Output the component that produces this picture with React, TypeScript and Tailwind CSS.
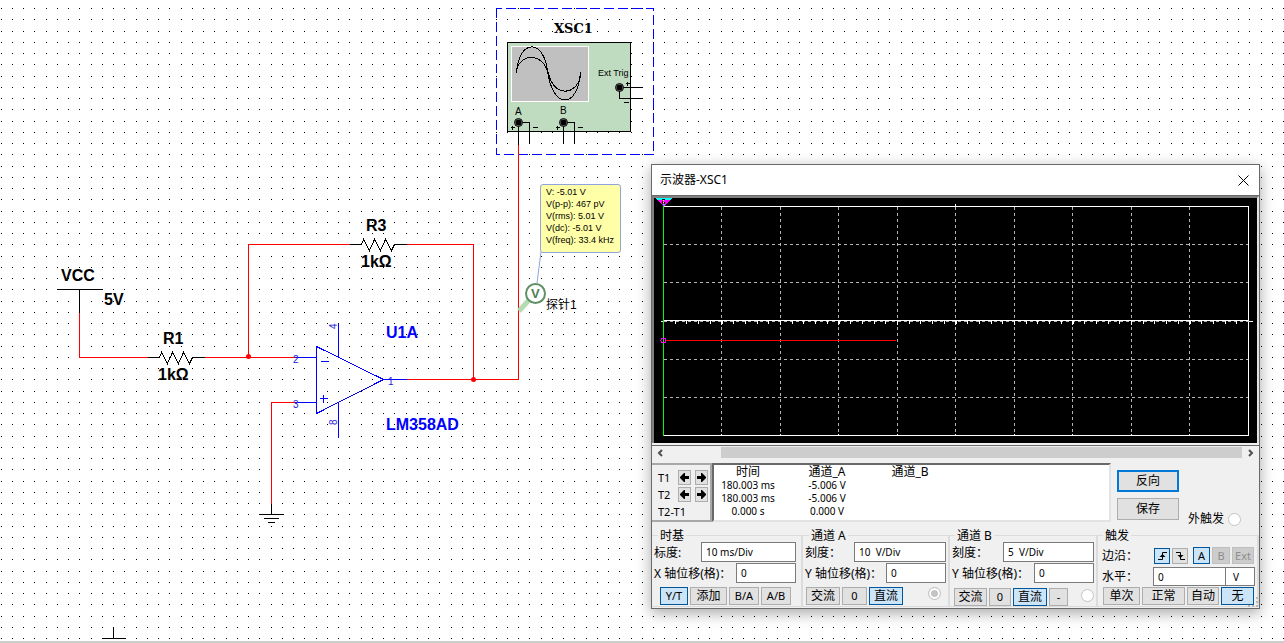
import type { ReactNode } from 'react';
import { clsx } from 'clsx';

const GRID_STEPS = [0, 11, 22, 33];
const ZIGZAG = 'l2 -5 l6 11 l5 -11 l6 11 l5 -11 l6 11 l3 -6';

const PROBE_LINES = ['V: -5.01 V', 'V(p-p): 467 pV', 'V(rms): 5.01 V', 'V(dc): -5.01 V', 'V(freq): 33.4 kHz'];

const READINGS = [
  ['180.003 ms', '-5.006 V'],
  ['180.003 ms', '-5.006 V'],
  ['0.000 s', '0.000 V'],
];

const DIV_X = [67, 126, 184, 243, 301, 360, 418, 477, 535];
const DIV_Y = [46, 84, 161, 199];
const TICKS = Array.from({ length: 49 }, (_, i) => Math.round(9 + (i + 1) * 11.7));

function Terminal({ x, y }: { x: number; y: number }) {
  return (
    <g shapeRendering="auto">
      <circle cx={x} cy={y} r="4" fill="#9a9a9a" stroke="#000" />
      <circle cx={x} cy={y} r="3" fill="#000" />
    </g>
  );
}

function Schematic() {
  return (
    <svg className="absolute inset-0 h-full w-full" role="img" aria-label="Schematic">
      <defs>
        <pattern id="dots" x="1" y="31" width="45" height="45" patternUnits="userSpaceOnUse">
          {GRID_STEPS.map((y) =>
            GRID_STEPS.map((x) => <rect key={`${x}-${y}`} x={x} y={y} width="1" height="1" fill="#000" />),
          )}
        </pattern>
      </defs>
      <rect width="100%" height="100%" fill="url(#dots)" />

      <g transform="translate(0.5 0.5)" fill="none" shapeRendering="crispEdges">
        {/* instrument block */}
        <path d="M496 8H653V154H496Z" stroke="#0000ff" strokeDasharray="10 4" strokeDashoffset="5" />
        <rect x="507" y="42" width="123" height="89" fill="#c0dcc0" stroke="#000" />
        <rect x="511" y="46" width="77" height="55" fill="#c0c0c0" stroke="#fff" />
        <g stroke="#000">
          <path d="M516 73C518 38 543 38 547 70C552 109 577 109 580 72" />
          <path d="M516 70C520 52 542 52 548 73C553 96 575 96 580 76" />
        </g>
        <path d="M518 122V144M518 122H529V143M563 122V143M563 122H574V143M619 87H642M619 87V98H642" stroke="#000" />
        <path d="M510 127H514M512 125V129M532 127H537M555 127H559M557 125V129M577 127H582M625 83H629M627 81V85M623 102H628" stroke="#000" />
        <Terminal x={518} y={122} />
        <Terminal x={563} y={122} />
        <Terminal x={619} y={87} />

        {/* wires */}
        <g stroke="#ff0000">
          <path d="M518 144V379H406" />
          <path d="M248 357V244H349M406 244H473V379" />
          <path d="M79 312V357H147M204 357H294" />
          <path d="M271 503V402H294" />
        </g>
        <g fill="#ff0000" shapeRendering="auto">
          <circle cx="248" cy="356" r="2.5" />
          <circle cx="473" cy="379" r="2.5" />
        </g>

        {/* supply, resistors and grounds */}
        <g stroke="#000">
          <path d="M57 289H102M79 289V312" />
          <path d="M147 357H159M192 357H204M349 244H361M394 244H406" />
          <path d={`M159 357${ZIGZAG}`} />
          <path d={`M361 244${ZIGZAG}`} />
          <path d="M271 503V514M259 514H283M263 518H278M267 522H274" />
          <path d="M113 627V638M102 638H125" />
        </g>

        {/* op-amp */}
        <g stroke="#0000ff">
          <path d="M316 346L383 379L316 413Z" />
          <path d="M294 357H316M294 402H316M383 379H406M338 323V357M338 402V437" />
          <path d="M320 361H328M319 398H327M323 394V402" />
        </g>
      </g>

      <g className="font-['Liberation_Sans',sans-serif] text-base font-bold">
        <text x="61" y="281">VCC</text>
        <text x="104" y="305">5V</text>
        <text x="163" y="344">R1</text>
        <text x="158" y="380">1kΩ</text>
        <text x="366" y="231">R3</text>
        <text x="361" y="267">1kΩ</text>
        <text x="386" y="338" fill="#0000ff">U1A</text>
        <text x="386" y="430" fill="#0000ff">LM358AD</text>
      </g>
      <g className="font-['Liberation_Sans',sans-serif] text-[10px]" fill="#2020e0">
        <text x="293" y="363">2</text>
        <text x="293" y="408">3</text>
        <text x="388" y="385">1</text>
        <text transform="translate(337 329) rotate(-90)">4</text>
        <text transform="translate(337 425) rotate(-90)">8</text>
      </g>
      <g className="font-['Liberation_Sans',sans-serif] text-[10px]">
        <text x="598" y="76" className="text-[9px]">Ext Trig</text>
        <text x="515" y="115">A</text>
        <text x="560" y="114">B</text>
      </g>
      <text x="554" y="33" className="font-['DejaVu_Serif',serif] text-[13px] font-bold">XSC1</text>

      {/* voltage probe */}
      <path d="M541 252L537 283" stroke="#8fa4dc" />
      <path d="M519 311L529 300" stroke="#b4dcb0" strokeWidth="5" />
      <circle cx="535.5" cy="293.5" r="9.5" fill="#fff" stroke="#5f8f64" strokeWidth="2" />
      <text x="531" y="298" fill="#4f8055" className="font-['Liberation_Sans',sans-serif] text-[13px] font-bold">V</text>
      <text x="546" y="309" className="font-['Liberation_Sans','Noto_Sans_CJK_SC',sans-serif] text-[12px]">探针1</text>
    </svg>
  );
}

function ProbeNote() {
  return (
    <div className="absolute left-[540px] top-[184px] h-[69px] w-[81px] whitespace-nowrap rounded-[3px] border border-[#8fa4dc] bg-[#ffffa8] pl-[5px] pt-px font-['Liberation_Sans',sans-serif] text-[9px] leading-[12px]">
      {PROBE_LINES.map((line) => (
        <p key={line}>{line}</p>
      ))}
    </div>
  );
}

function ScopeScreen() {
  return (
    <svg className="block h-[245px] w-full bg-black" role="img" aria-label="Trace" shapeRendering="crispEdges">
      <g transform="translate(0.5 0.5)" fill="none">
        <g stroke="#b4b4b4" strokeDasharray="3 3">
          {DIV_X.map((x) => (
            <path key={x} d={`M${x} 8V237`} />
          ))}
          {DIV_Y.map((y) => (
            <path key={y} d={`M9 ${y}H594`} />
          ))}
        </g>
        <path d="M9 8H594V237H9M9 122H594M6 123H9M594 123H598M301 5V8" stroke="#fff" />
        <path d="M9 123H594" stroke="#b4b4b4" strokeDasharray="3 3" />
        <path d={TICKS.map((x) => `M${x} 122V125`).join('')} stroke="#fff" />
        <path d={DIV_X.map((x) => `M${x} 235V237M${x} 121V126`).join('')} stroke="#fff" />
      </g>
      <rect x="9" y="8" width="1" height="230" fill="#00ff00" />
      <rect x="12" y="142" width="230" height="1" fill="#ff0000" />
      <circle cx="9.5" cy="142.5" r="2.5" fill="none" stroke="#ff00ff" />
      <path d="M1 0H18L16 2H3Z" fill="#00ffff" />
      <path d="M3 2H16L10 8H9Z" fill="#ff00ff" />
      <path d="M8 1H11V2H8ZM8 3H9V6H8ZM10 4H11V6H10Z" fill="#000" />
      <path d="M9 2H10V3H9ZM9 4H10V5H9Z" fill="#ffff00" />
      <path d="M9 6H11V7H9Z" fill="#00ffff" />
    </svg>
  );
}

type ButtonProps = { children: ReactNode; className: string; active?: boolean; disabled?: boolean; label?: string };

function PanelButton({ children, className, active, disabled, label }: ButtonProps) {
  return (
    <button
      type="button"
      disabled={disabled}
      aria-label={label}
      className={clsx(
        'flex shrink-0 items-center justify-center whitespace-nowrap border',
        active && 'border-[#00559b] bg-[#cce4f7]',
        disabled && 'border-[#bfbfbf] bg-[#cccccc] text-[#8c8c8c]',
        !active && !disabled && 'border-[#adadad] bg-[#e1e1e1]',
        className,
      )}
    >
      {children}
    </button>
  );
}

function Arrow({ right, label }: { right?: boolean; label: string }) {
  return (
    <PanelButton label={label} className="h-[15px] w-[13px]">
      <svg width="9" height="9" viewBox="0 0 9 9" className="shrink-0">
        <path d={right ? 'M0 3H4V0H5L9 4V5L5 9H4V6H0Z' : 'M9 3H5V0H4L0 4V5L4 9H5V6H9Z'} />
      </svg>
    </PanelButton>
  );
}

function Radio({ label, checked, className }: { label: string; checked?: boolean; className?: string }) {
  return (
    <input
      type="radio"
      aria-label={label}
      defaultChecked={checked}
      className={clsx(
        'size-[13px] shrink-0 appearance-none rounded-full border border-[#c4c4c4] bg-white',
        'checked:border-[#c4c4c4] checked:bg-[#c4c4c4] checked:shadow-[inset_0_0_0_2px_white]',
        className,
      )}
    />
  );
}

type FieldProps = { id: string; label: string; value: string; className: string };

function Field({ id, label, value, className }: FieldProps) {
  return (
    <div className="flex items-center justify-between">
      <label htmlFor={id} className="whitespace-pre pt-0.5">{label}</label>
      <input
        id={id}
        defaultValue={value}
        className={clsx("h-5 min-w-0 border border-[#7a7a7a] bg-white px-1 font-['Noto_Sans',sans-serif] text-[10px]", className)}
      />
    </div>
  );
}

type GroupProps = { title: string; className: string; legendClass?: string; children: ReactNode };

function Group({ title, className, legendClass = 'ml-1', children }: GroupProps) {
  return (
    <fieldset className={clsx('min-w-0 border-y border-r-2 border-[#dcdcdc]', className)}>
      <legend className={clsx('px-0.5 leading-[13px]', legendClass)}>{title}</legend>
      {children}
    </fieldset>
  );
}

function CursorPanel() {
  return (
    <div className="flex h-[59px] items-stretch">
      <div className="grid w-[60px] shrink-0 grid-cols-[1fr_13px_13px] content-start items-center gap-x-1 gap-y-0.5 border-2 border-l-0 border-[#a8a8a8] pl-1.5 pr-0.5 pt-[5px] font-['Noto_Sans',sans-serif] text-[11px] leading-[15px]">
        <span>T1</span>
        <Arrow label="T1 left" />
        <Arrow right label="T1 right" />
        <span>T2</span>
        <Arrow label="T2 left" />
        <Arrow right label="T2 right" />
        <span className="col-span-3 whitespace-nowrap">T2-T1</span>
      </div>
      <div className="w-[399px] shrink-0 border-2 border-b-[#e3e3e3] border-l-[#696969] border-r-[#e3e3e3] border-t-[#696969] bg-white">
        <table className="table-fixed border-collapse text-center font-['Noto_Sans','Noto_Sans_CJK_SC',sans-serif] text-[10px] leading-[13px]">
          <thead>
            <tr className="text-[12px] leading-[14px]">
              <th className="w-[68px] p-0 font-normal">时间</th>
              <th className="w-[90px] p-0 font-normal">通道_A</th>
              <th className="w-[76px] p-0 font-normal">通道_B</th>
            </tr>
          </thead>
          <tbody>
            {READINGS.map(([time, a], i) => (
              <tr key={i}>
                <td className="p-0">{time}</td>
                <td className="p-0">{a}</td>
                <td className="p-0" />
              </tr>
            ))}
          </tbody>
        </table>
      </div>
      <div className="ml-[6px] flex flex-col gap-[6px] pt-[7px]">
        <button type="button" className="h-[22px] w-[62px] border-2 border-[#0078d7] bg-[#e1e1e1]">反向</button>
        <button type="button" className="h-[22px] w-[62px] border border-[#adadad] bg-[#e1e1e1]">保存</button>
      </div>
      <div className="-mb-1 ml-[9px] flex items-center gap-1 self-end whitespace-nowrap leading-[14px]">
        <span>外触发</span>
        <Radio label="外触发" />
      </div>
    </div>
  );
}

function SettingsPanel() {
  return (
    <div className="mt-[7px] grid grid-cols-[151fr_147fr_148fr_161fr]">
      <Group title="时基" className="pl-0.5 pr-[5px]">
        <Field id="time-scale" label="标度:" value="10 ms/Div" className="w-[95px]" />
        <div className="mt-px">
          <Field id="time-pos" label="X 轴位移(格)：" value="0" className="w-[60px]" />
        </div>
        <div className="mt-1 flex gap-0.5 pl-[6px]">
          <PanelButton active className="h-[18px] w-7 text-[11px]">Y/T</PanelButton>
          <PanelButton className="h-[18px] w-[37px]">添加</PanelButton>
          <PanelButton className="h-[18px] w-[30px] text-[11px]">B/A</PanelButton>
          <PanelButton className="h-[18px] w-[30px] text-[11px]">A/B</PanelButton>
        </div>
      </Group>
      <Group title="通道 A" className="px-0.5">
        <Field id="a-scale" label="刻度：" value="10  V/Div" className="w-[92px]" />
        <div className="mt-px">
          <Field id="a-pos" label="Y 轴位移(格)：" value="0" className="w-[60px]" />
        </div>
        <div className="mt-1 flex gap-0.5 pl-px">
          <PanelButton className="h-[18px] w-[34px]">交流</PanelButton>
          <PanelButton className="h-[18px] w-[25px] text-[11px]">0</PanelButton>
          <PanelButton active className="h-[18px] w-[34px]">直流</PanelButton>
          <Radio label="通道 A" checked className="ml-auto mr-[5px]" />
        </div>
      </Group>
      <Group title="通道 B" className="px-0.5" legendClass="ml-[3px]">
        <Field id="b-scale" label="刻度：" value="5  V/Div" className="w-[91px]" />
        <div className="mt-px">
          <Field id="b-pos" label="Y 轴位移(格)：" value="0" className="w-[60px]" />
        </div>
        <div className="mt-1 flex items-end gap-0.5 pl-0.5 pt-px">
          <PanelButton className="h-[18px] w-[33px]">交流</PanelButton>
          <PanelButton className="h-[18px] w-[22px] text-[11px]">0</PanelButton>
          <PanelButton active className="h-[18px] w-[34px]">直流</PanelButton>
          <PanelButton className="h-[18px] w-[19px] text-[11px]">-</PanelButton>
          <Radio label="通道 B" className="mb-1 ml-auto" />
        </div>
      </Group>
      <Group title="触发" className="pl-1 pr-0.5" legendClass="ml-px">
        <div className="flex items-center gap-0.5 pt-[5px]">
          <span className="w-[50px] shrink-0">边沿：</span>
          <PanelButton active label="上升沿" className="size-4">
            <svg width="9" height="10" viewBox="0 0 9 10" className="shrink-0">
              <path d="M0 8.5H4.5V1.5H9" fill="none" stroke="#000" />
              <path d="M4.5 3L7.5 6H1.5Z" />
            </svg>
          </PanelButton>
          <PanelButton label="下降沿" className="size-4">
            <svg width="9" height="10" viewBox="0 0 9 10" className="shrink-0">
              <path d="M0 1.5H4.5V8.5H9" fill="none" stroke="#000" />
              <path d="M4.5 7L7.5 4H1.5Z" />
            </svg>
          </PanelButton>
          <PanelButton active className="ml-[3px] h-[17px] w-[17px] text-[11px]">A</PanelButton>
          <PanelButton disabled className="h-[17px] w-[18px] text-[11px]">B</PanelButton>
          <PanelButton disabled className="h-[17px] w-[22px] text-[11px]">Ext</PanelButton>
        </div>
        <div className="mt-[3px] flex items-center">
          <label htmlFor="level" className="w-[51px] shrink-0">水平：</label>
          <input
            id="level"
            defaultValue="0"
            className="h-[19px] w-[73px] min-w-0 border border-[#7a7a7a] bg-white px-1 font-['Noto_Sans',sans-serif] text-[10px]"
          />
          <input
            aria-label="单位"
            defaultValue="V"
            className="h-[19px] min-w-0 flex-1 border border-l-0 border-[#7a7a7a] bg-white px-[7px] font-['Noto_Sans',sans-serif] text-[10px]"
          />
        </div>
        <div className="mt-px flex gap-0.5 pl-px">
          <PanelButton className="h-[18px] w-[37px]">单次</PanelButton>
          <PanelButton className="h-[18px] w-[43px]">正常</PanelButton>
          <PanelButton className="h-[18px] w-8">自动</PanelButton>
          <PanelButton active className="h-[18px] w-[33px]">无</PanelButton>
        </div>
      </Group>
    </div>
  );
}

function ResizeGrip() {
  return (
    <svg className="absolute bottom-0 right-0" width="11" height="11" viewBox="0 0 11 11" fill="#b8b8b8">
      <path d="M8 0H10V2H8ZM8 4H10V6H8ZM8 8H10V10H8ZM4 8H6V10H4ZM0 8H2V10H0Z" />
    </svg>
  );
}

function ScopeWindow() {
  return (
    <section className="absolute left-[651px] top-[164px] w-[609px] border border-[#696969] bg-[#f0f0f0] font-['Noto_Sans','Noto_Sans_CJK_SC',sans-serif] text-[12px] leading-4 shadow-[0_4px_14px_rgba(0,0,0,0.35)]">
      <header className="flex h-[31px] items-center justify-between border-b border-[#696969] bg-white pl-2 pr-2.5">
        <h1>示波器-XSC1</h1>
        <button type="button" aria-label="Close">
          <svg width="11" height="11" viewBox="0 0 11 11" stroke="#000" fill="none">
            <path d="M0.5 0.5L10.5 10.5M10.5 0.5L0.5 10.5" />
          </svg>
        </button>
      </header>
      <div className="border-2 border-b-0 border-l-[#808080] border-r-[#e3e3e3] border-t-[#808080]">
        <ScopeScreen />
      </div>
      <div className="border-b border-[#696969] pt-0.5" />
      <div className="flex h-[13px] items-center bg-[#f0f0f0] px-[5px]">
        <svg width="6" height="8" viewBox="0 0 6 8" fill="none" stroke="#505050" strokeWidth="2">
          <path d="M5 1L2 4L5 7" />
        </svg>
        <div className="ml-[58px] mr-[6px] h-[11px] flex-1 bg-[#cdcdcd]" />
        <svg width="6" height="8" viewBox="0 0 6 8" fill="none" stroke="#505050" strokeWidth="2">
          <path d="M1 1L4 4L1 7" />
        </svg>
      </div>
      <div className="pb-px pt-1">
        <CursorPanel />
        <SettingsPanel />
      </div>
      <ResizeGrip />
    </section>
  );
}

export default function App() {
  return (
    <main className="relative h-screen overflow-hidden border-b-2 border-[#cccccc] bg-white text-black">
      <Schematic />
      <ProbeNote />
      <ScopeWindow />
    </main>
  );
}
